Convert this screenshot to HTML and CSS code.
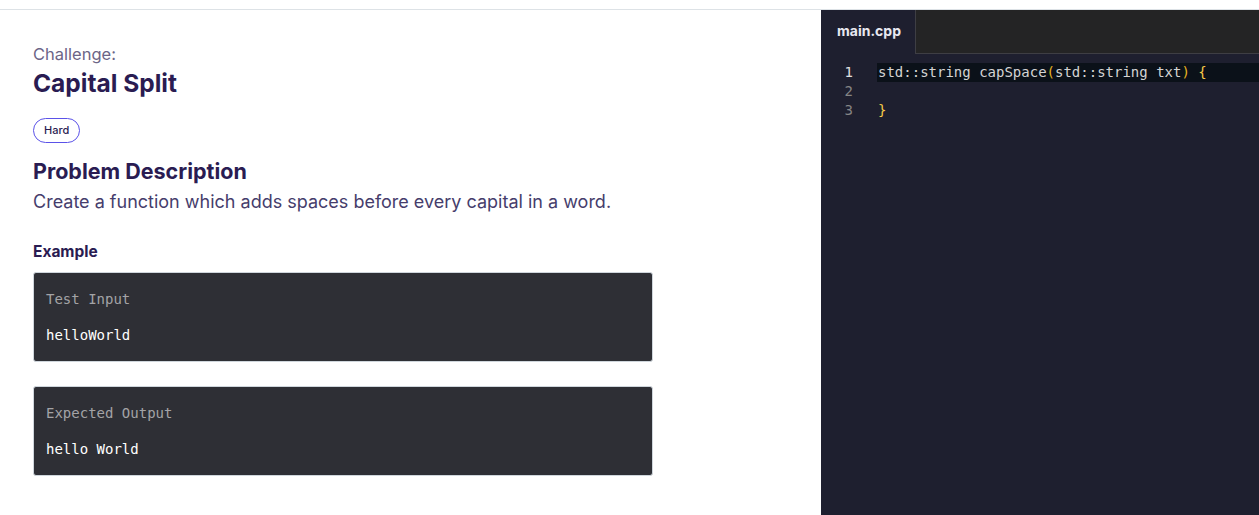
FILE: index.html
```html
<!DOCTYPE html>
<html>
<head>
<meta charset="utf-8">
<link rel="stylesheet" href="styles.css">
</head>
<body>
<div class="topbar"></div>
<div class="main">
  <section class="problem">
    <div class="label">Challenge:</div>
    <h1 class="title">Capital Split</h1>
    <span class="pill">Hard</span>
    <h2 class="heading">Problem Description</h2>
    <p class="desc">Create a function which adds spaces before every capital in a word.</p>
    <h3 class="example">Example</h3>
    <div class="box">
      <div class="box-label">Test Input</div>
      <div class="box-value">helloWorld</div>
    </div>
    <div class="box">
      <div class="box-label">Expected Output</div>
      <div class="box-value">hello World</div>
    </div>
  </section>
  <section class="editor">
    <div class="tabs">
      <div class="tab">main.cpp</div>
      <div class="tab-rest"></div>
    </div>
    <div class="code">
      <div class="line active"><span class="ln">1</span><span class="src">std::string capSpace<span class="p1">(</span>std::string txt<span class="p1">)</span> <span class="p2">{</span></span></div>
      <div class="line"><span class="ln">2</span><span class="src"></span></div>
      <div class="line"><span class="ln">3</span><span class="src"><span class="p2">}</span></span></div>
    </div>
  </section>
</div>
</body>
</html>
```
FILE: styles.css
```css
* { box-sizing: border-box; }
html, body { margin: 0; padding: 0; height: 100%; }
body { background: #fff; font-family: "Inter", "Lato", sans-serif; overflow: hidden; }
.topbar { height: 10px; border-bottom: 1px solid #dde2e6; }
.main { display: flex; height: 505px; }
.problem { width: 821px; padding: 34px 0 0 33px; }
.label { font-size: 16.5px; color: #6c6587; line-height: 20px; }
.title { margin: 4px 0 0; font-size: 24.5px; font-weight: 700; color: #2a1c52; line-height: 30px; }
.pill { display: inline-block; margin-top: 20px; height: 25px; padding: 0 10px; border: 1px solid #5b52e8; border-radius: 13px; font-size: 11px; font-weight: 500; line-height: 23px; color: #2a1c52; }
.heading { margin: 14px 0 0; font-size: 21.5px; font-weight: 700; color: #2a1c52; line-height: 28px; }
.desc { margin: 5px 0 0; font-size: 18px; color: #463d6c; line-height: 24px; }
.example { margin: 28px 0 0; font-size: 15.5px; font-weight: 700; color: #2a1c52; line-height: 20px; }
.box { width: 620px; height: 90px; margin-top: 10px; background: #2e2f35; border: 1px solid #cfd6dc; border-radius: 3px; padding: 16px 12px 0; font-family: "DejaVu Sans Mono", monospace; font-size: 14px; }
.box + .box { margin-top: 24px; }
.box-label { color: #a3a3a6; line-height: 20px; }
.box-value { color: #ffffff; margin-top: 16px; line-height: 20px; }
.editor { flex: 1; background: #1e1f2f; }
.tabs { display: flex; height: 44px; }
.tab { width: 94px; padding: 12px 0 0 16px; font-size: 14px; font-weight: 700; color: #e8e8f0; }
.tab-rest { flex: 1; background: #242425; border-left: 1px solid #3e3e44; border-bottom: 1px solid #3e3e44; }
.code { padding-top: 9px; font-family: "DejaVu Sans Mono", monospace; font-size: 14px; }
.line { display: flex; height: 19px; line-height: 19px; }
.ln { width: 56px; padding-right: 24px; text-align: right; color: #858585; }
.active .ln { color: #e0e0e0; }
.src { flex: 1; color: #d4d4d4; padding-left: 1px; }
.active .src { background: #0b1119; }
.p1 { color: #e6b422; }
.p2 { color: #f7c948; }
```
